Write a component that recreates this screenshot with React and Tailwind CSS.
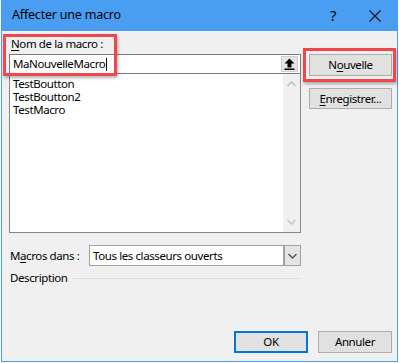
import React from "react";

const F = { fontFamily: '"Noto Sans", "Open Sans", sans-serif' };

function ChevronUp() {
  return (
    <svg width="9" height="6" viewBox="0 0 9 6">
      <path d="M0.5 5 L4.5 1 L8.5 5" fill="none" stroke="#c2c2c2" strokeWidth="1.6" />
    </svg>
  );
}
function ChevronDown({ color = "#c2c2c2" }) {
  return (
    <svg width="9" height="6" viewBox="0 0 9 6">
      <path d="M0.5 1 L4.5 5 L8.5 1" fill="none" stroke={color} strokeWidth="1.4" />
    </svg>
  );
}

export default function App() {
  return (
    <div className="w-[399px] h-[363px] bg-white overflow-hidden text-[11.5px] tracking-[-0.4px] text-black" style={F}>
      <div className="relative ml-px w-[397px] h-[362px] bg-[#f0f0f0] border-x border-b border-[#4a9ef2] flex flex-col">
        {/* Title bar */}
        <div className="h-[31px] -mx-px bg-[#4a9ef2] flex items-center pl-[11px] shrink-0">
          <span className="text-[12.5px] tracking-[-0.2px] leading-none text-black flex-1">Affecter une macro</span>
          <span className="text-[15px] leading-none text-black w-[20px] text-center mr-[26px]">?</span>
          <svg width="12" height="12" viewBox="0 0 12 12" className="mr-[17px]">
            <path d="M0.5 0.5 L11.5 11.5 M11.5 0.5 L0.5 11.5" stroke="#111" strokeWidth="1.1" />
          </svg>
        </div>

        {/* Body */}
        <div className="flex flex-1 pl-[7px] pr-[5px]">
          {/* Left column */}
          <div className="w-[292px] flex flex-col">
            <div className="h-[16px] mt-[5px] leading-[16px] pl-[2px]">
              <span className="underline underline-offset-2">N</span>om de la macro :
            </div>
            <div className="mt-[2px] h-[20px] bg-white border border-[#7a7a7a] flex items-center">
              <span className="pl-[3px] leading-none">MaNouvelleMacro</span>
              <span className="w-px h-[13px] bg-black ml-[1px]" />
              <div className="flex-1" />
              <div className="w-[17px] h-[16px] mr-[2px] bg-[#e5e5e5] border border-[#d0d0d0] flex items-center justify-center">
                <svg width="11" height="12" viewBox="0 0 11 12">
                  <path d="M5.5 0.5 L10.5 5.5 L7.5 5.5 L7.5 9.5 L3.5 9.5 L3.5 5.5 L0.5 5.5 Z" fill="#000" />
                  <rect x="0.5" y="10.5" width="10" height="1.5" fill="#000" />
                </svg>
              </div>
            </div>
            <div className="h-[159px] bg-white border border-[#828790] border-t-0 flex">
              <div className="flex-1 pt-[3px] pl-[3px] leading-[13px]">
                <div className="h-[13px]">TestBoutton</div>
                <div className="h-[13px]">TestBoutton2</div>
                <div className="h-[13px]">TestMacro</div>
              </div>
              <div className="w-[17px] bg-[#f0f0f0] flex flex-col items-center justify-between py-[7px]">
                <ChevronUp />
                <ChevronDown />
              </div>
            </div>

            <div className="mt-[12px] flex items-center h-[21px]">
              <div className="w-[80px] pl-[1px]">
                M<span className="underline underline-offset-2">a</span>cros dans :
              </div>
              <div className="flex-1 h-[21px] bg-white border border-[#a0a0a0] flex items-center">
                <span className="pl-[3px] flex-1 leading-none">Tous les classeurs ouverts</span>
                <div className="w-[17px] h-[19px] bg-[#e5e5e5] border-l-2 border-[#a0a0a0] flex items-center justify-center">
                  <ChevronDown color="#555" />
                </div>
              </div>
            </div>

            <div className="mt-[3px] flex items-center h-[18px]">
              <span className="pl-[1px] pr-[6px]">Description</span>
              <div className="flex-1 h-px bg-[#dcdcdc]" />
            </div>
          </div>

          {/* Right column */}
          <div className="ml-[8px] w-[83px] flex flex-col">
            <button className="mt-[23px] h-[22px] bg-[#e1e1e1] border border-[#adadad] leading-none">
              N<span className="underline underline-offset-2">o</span>uvelle
            </button>
            <button className="mt-[12px] h-[21px] bg-[#e1e1e1] border border-[#adadad] leading-none">
              <span className="underline underline-offset-2">E</span>nregistrer...
            </button>
          </div>
        </div>

        {/* Bottom buttons */}
        <div className="flex justify-end gap-[10px] pr-[5px] pb-[8px]">
          <button className="w-[74px] h-[22px] bg-[#e1e1e1] border-2 border-[#0078d7] leading-none">OK</button>
          <button className="w-[74px] h-[22px] bg-[#e1e1e1] border border-[#adadad] leading-none">Annuler</button>
        </div>

        {/* Red highlight annotations */}
        <div className="absolute left-[1px] top-[34px] w-[114px] h-[42px] border-[3px] border-[#f0474c] shadow-[1px_2px_3px_rgba(0,0,0,0.3)] pointer-events-none" />
        <div className="absolute left-[301px] top-[48px] w-[93px] h-[34px] border-[3px] border-[#f0474c] shadow-[1px_2px_3px_rgba(0,0,0,0.3)] pointer-events-none" />
      </div>
    </div>
  );
}
